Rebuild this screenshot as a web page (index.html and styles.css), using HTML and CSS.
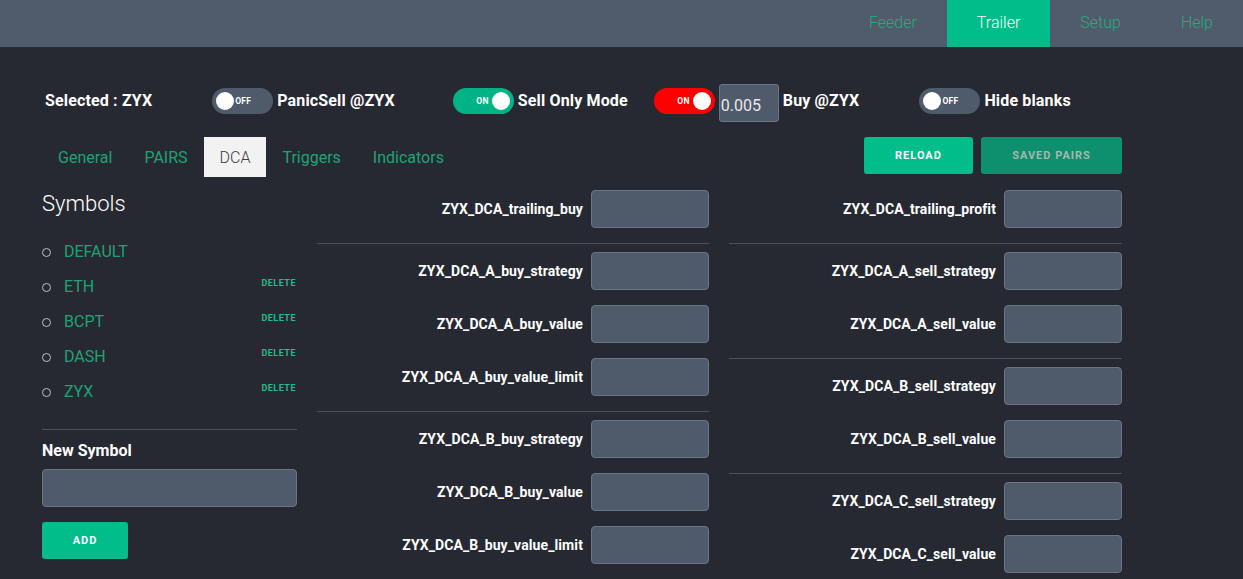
FILE: index.html
```html
<!DOCTYPE html>
<html>
<head>
<meta charset="utf-8">
<link rel="stylesheet" href="styles.css">
</head>
<body>
<header class="topbar">
  <nav class="mainnav">
    <a class="navitem">Feeder</a>
    <a class="navitem active">Trailer</a>
    <a class="navitem">Setup</a>
    <a class="navitem">Help</a>
  </nav>
</header>
<main class="page">
  <div class="toolbar">
    <span class="selected">Selected : ZYX</span>
    <span class="group g1"><span class="toggle off"><span class="knob"></span><span class="tlabel">OFF</span></span><span class="glabel">PanicSell @ZYX</span></span>
    <span class="group g2"><span class="toggle on green"><span class="tlabel">ON</span><span class="knob"></span></span><span class="glabel">Sell Only Mode</span></span>
    <span class="group g3"><span class="toggle on red"><span class="tlabel">ON</span><span class="knob"></span></span><span class="amount">0.005</span><span class="glabel">Buy @ZYX</span></span>
    <span class="group g4"><span class="toggle off"><span class="knob"></span><span class="tlabel">OFF</span></span><span class="glabel">Hide blanks</span></span>
  </div>
  <div class="tabrow">
    <div class="tabs">
      <a class="tab">General</a>
      <a class="tab">PAIRS</a>
      <a class="tab active">DCA</a>
      <a class="tab">Triggers</a>
      <a class="tab">Indicators</a>
    </div>
    <div class="actions">
      <button class="btn primary">RELOAD</button>
      <button class="btn dim">SAVED PAIRS</button>
    </div>
  </div>
  <div class="columns">
    <aside class="side">
      <h2 class="symtitle">Symbols</h2>
      <ul class="symlist">
        <li class="sym"><span class="symname">DEFAULT</span></li>
        <li class="sym"><span class="symname">ETH</span><span class="del">DELETE</span></li>
        <li class="sym"><span class="symname">BCPT</span><span class="del">DELETE</span></li>
        <li class="sym"><span class="symname">DASH</span><span class="del">DELETE</span></li>
        <li class="sym"><span class="symname">ZYX</span><span class="del">DELETE</span></li>
      </ul>
      <div class="sep"></div>
      <div class="newlabel">New Symbol</div>
      <div class="field wide"></div>
      <button class="btn primary add">ADD</button>
    </aside>
    <section class="col">
      <div class="row"><span class="lbl">ZYX_DCA_trailing_buy</span><span class="field"></span></div>
      <div class="sep"></div>
      <div class="row"><span class="lbl">ZYX_DCA_A_buy_strategy</span><span class="field"></span></div>
      <div class="row"><span class="lbl">ZYX_DCA_A_buy_value</span><span class="field"></span></div>
      <div class="row"><span class="lbl">ZYX_DCA_A_buy_value_limit</span><span class="field"></span></div>
      <div class="sep"></div>
      <div class="row"><span class="lbl">ZYX_DCA_B_buy_strategy</span><span class="field"></span></div>
      <div class="row"><span class="lbl">ZYX_DCA_B_buy_value</span><span class="field"></span></div>
      <div class="row"><span class="lbl">ZYX_DCA_B_buy_value_limit</span><span class="field"></span></div>
    </section>
    <section class="col right">
      <div class="row"><span class="lbl">ZYX_DCA_trailing_profit</span><span class="field"></span></div>
      <div class="sep"></div>
      <div class="row"><span class="lbl">ZYX_DCA_A_sell_strategy</span><span class="field"></span></div>
      <div class="row"><span class="lbl">ZYX_DCA_A_sell_value</span><span class="field"></span></div>
      <div class="sep"></div>
      <div class="row"><span class="lbl">ZYX_DCA_B_sell_strategy</span><span class="field"></span></div>
      <div class="row"><span class="lbl">ZYX_DCA_B_sell_value</span><span class="field"></span></div>
      <div class="sep"></div>
      <div class="row"><span class="lbl">ZYX_DCA_C_sell_strategy</span><span class="field"></span></div>
      <div class="row"><span class="lbl">ZYX_DCA_C_sell_value</span><span class="field"></span></div>
    </section>
  </div>
</main>
</body>
</html>
```
FILE: styles.css
```css
* { box-sizing: border-box; }
html, body { margin: 0; padding: 0; }
body {
  background: #262932;
  font-family: Roboto, "Liberation Sans", sans-serif;
  color: #fff;
  width: 1243px;
  height: 579px;
  overflow: hidden;
}
.topbar {
  height: 47px;
  background: #505c6c;
  display: flex;
  justify-content: flex-end;
}
.mainnav { display: flex; }
.navitem {
  display: flex;
  align-items: center;
  padding: 0 30px 2px;
  height: 47px;
  font-size: 16px;
  color: #21ad7e;
  font-weight: 300;
}
.navitem.active { background: #00bd8a; color: #fff; }

.page { padding: 0 0 0 42px; }
.toolbar {
  margin-top: 37px;
  height: 38px;
  display: flex;
  align-items: flex-start;
}
.selected {
  font-weight: 700;
  font-size: 16px;
  margin-left: 3px;
  margin-top: 4px;
  line-height: 26px;
  letter-spacing: 0.15px;
}
.group { display: flex; align-items: flex-start; }
.g1 { margin-left: 60px; }
.g2 { margin-left: 58px; }
.g3 { margin-left: 26px; }
.g4 { margin-left: 60px; }
.glabel {
  font-weight: 700;
  font-size: 16px;
  margin-left: 4px;
  margin-top: 4px;
  line-height: 26px;
  letter-spacing: 0.15px;
}
.toggle {
  width: 61px;
  height: 26px;
  margin-top: 4px;
  border-radius: 13px;
  display: flex;
  align-items: center;
  padding: 0 4px;
}
.toggle.off { background: #4f5b6b; }
.toggle.green { background: #00b386; justify-content: flex-end; }
.toggle.red { background: #ff0000; justify-content: flex-end; }
.knob {
  width: 18px;
  height: 18px;
  border-radius: 50%;
  background: #fff;
}
.tlabel {
  font-size: 8.5px;
  font-weight: 700;
  color: #fff;
  letter-spacing: 0.3px;
}
.toggle.off .tlabel { margin-left: 1px; }
.toggle.on .tlabel { margin-right: 3px; }
.amount {
  margin-left: 4px;
  width: 60px;
  height: 38px;
  background: #4f5b6b;
  border: 1px solid #6b7586;
  border-radius: 3px;
  display: flex;
  align-items: center;
  padding: 4px 0 0 1px;
  font-size: 16px;
  color: #e8e8e8;
}

.tabrow {
  margin-top: 15px;
  width: 1080px;
  display: flex;
  justify-content: space-between;
  align-items: flex-start;
}
.tabs { display: flex; }
.tab {
  height: 40px;
  padding: 0 16px;
  display: flex;
  align-items: center;
  font-size: 16px;
  color: #1ea372;
}
.tab.active { background: #f2f2f2; color: #3a3a3a; font-weight: 300; }
.actions { display: flex; gap: 8px; }
.btn {
  border: 0;
  border-radius: 3px;
  height: 37px;
  font-family: Roboto, "Liberation Sans", sans-serif;
  font-weight: 700;
  font-size: 11px;
  letter-spacing: 1px;
  color: #fff;
}
.btn.primary { background: #00bd8a; width: 109px; }
.btn.dim { background: #0e8f6e; width: 141px; color: #a3b8b0; }

.columns {
  margin-top: 13px;
  display: flex;
  gap: 20px;
}
.side { width: 255px; }
.symtitle {
  margin: 0;
  font-size: 22px;
  font-weight: 300;
  line-height: 28px;
}
.symlist { list-style: none; margin: 16px 0 0; padding: 0; }
.sym {
  height: 35px;
  display: flex;
  align-items: center;
  position: relative;
  padding-left: 22px;
}
.sym::before {
  content: "";
  position: absolute;
  left: 0;
  top: 14px;
  width: 7px;
  height: 7px;
  border: 1.5px solid #c0c0c0;
  border-radius: 50%;
}
.symname { font-size: 16px; color: #1ea372; font-weight: 400; flex: 1; }
.del {
  font-size: 9px;
  font-weight: 700;
  color: #1fbf8a;
  letter-spacing: 0.5px;
  align-self: flex-start;
  margin-top: 9px;
  margin-right: 1px;
}
.sep { height: 1px; background: #4c5059; }
.side .sep { margin-top: 20px; }
.newlabel {
  margin-top: 11px;
  font-weight: 700;
  font-size: 16px;
  line-height: 20px;
}
.field {
  display: block;
  width: 118px;
  height: 38px;
  background: #4f5b6b;
  border: 1px solid #6b7586;
  border-radius: 4px;
}
.field.wide { width: 255px; margin-top: 8px; }
.btn.add { width: 86px; margin-top: 15px; }

.col { width: 392px; }
.col.right { width: 393px; }
.row {
  display: flex;
  align-items: center;
  justify-content: flex-end;
  gap: 8px;
  margin-bottom: 15px;
}
.lbl { font-weight: 700; font-size: 14px; letter-spacing: 0.1px; }
.col .sep { margin-bottom: 8px; }
```
